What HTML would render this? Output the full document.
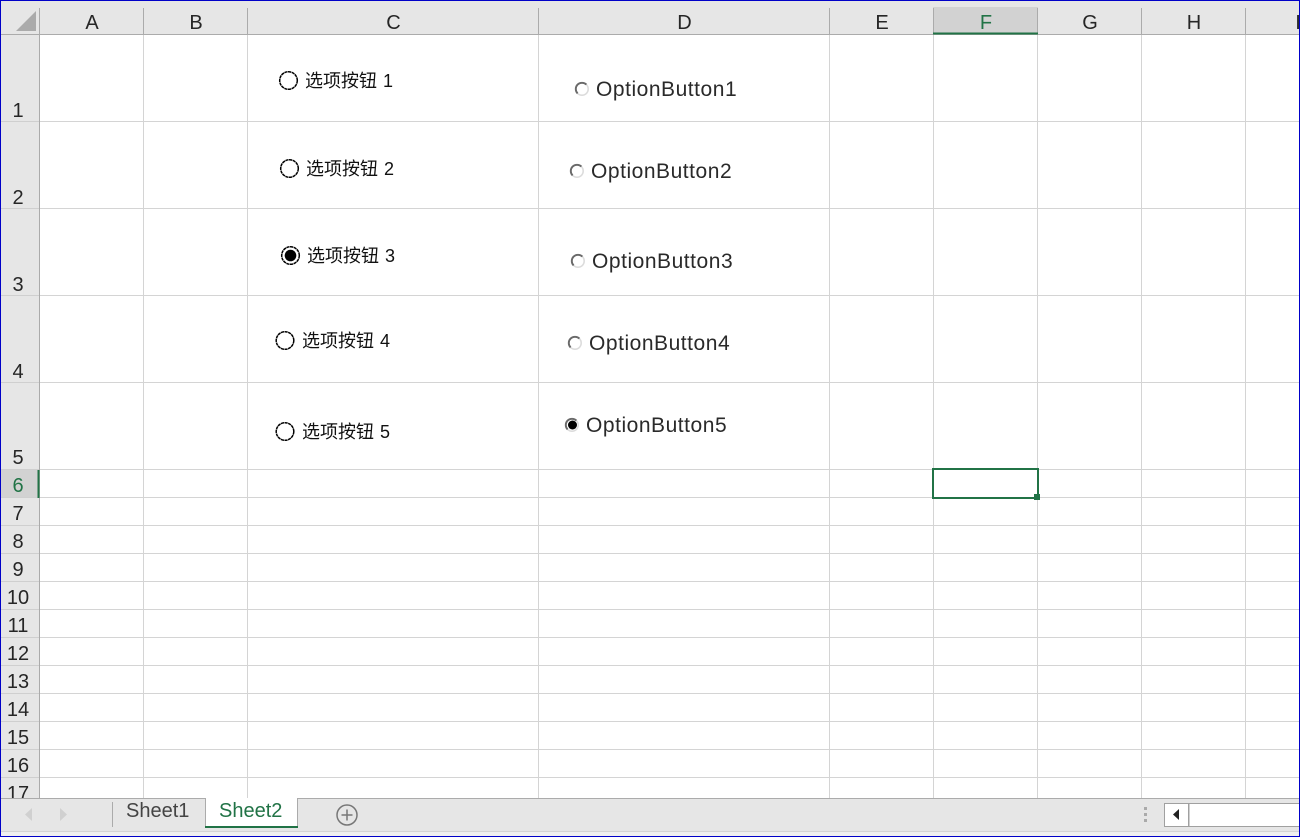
<!DOCTYPE html>
<html><head><meta charset="utf-8">
<style>
html,body{margin:0;padding:0;background:#fff}
#p{position:relative;width:1300px;height:837px;overflow:hidden;background:#fff;font-family:"Liberation Sans","Noto Sans CJK SC",sans-serif;color:#222}
#p div,#p span{position:absolute}
.t{white-space:nowrap;line-height:1}
.ch{font-size:20px;top:12px;text-align:center;line-height:22px;height:22px;color:#262626}
.rh{font-size:20px;left:2px;width:32px;text-align:center;line-height:22px;height:22px;color:#262626}
.cn{font-size:18px;color:#111;white-space:nowrap;line-height:22px;height:22px;word-spacing:1px}
.en{font-size:21px;letter-spacing:.53px;color:#2a2a2a;white-space:nowrap;line-height:24px;height:24px}
svg{position:absolute;overflow:visible}
</style></head><body>
<div id="p">
<!-- headers -->
<div style="left:0;top:0;width:1300px;height:34px;background:#e6e6e6"></div>
<div style="left:0;top:34px;width:39px;height:764px;background:#e6e6e6"></div>
<div style="left:933px;top:7px;width:105px;height:27px;background:#d2d2d2"></div>
<div style="left:0;top:470px;width:39px;height:28px;background:#d2d2d2"></div>

<!-- grid -->
<svg style="left:0;top:0" width="1300" height="837">
<g stroke="#d4d4d4" stroke-width="1" shape-rendering="crispEdges">
<path d="M143.5 35V798M247.5 35V798M538.5 35V798M829.5 35V798M933.5 35V798M1037.5 35V798M1141.5 35V798M1245.5 35V798"/>
<path d="M40 121.500H1300M40 208.500H1300M40 295.500H1300M40 382.500H1300M40 469.500H1300M40 497.500H1300M40 525.500H1300M40 553.500H1300M40 581.500H1300M40 609.500H1300M40 637.500H1300M40 665.500H1300M40 693.500H1300M40 721.500H1300M40 749.500H1300M40 777.500H1300"/>
</g>
<g stroke="#ababab" stroke-width="1" shape-rendering="crispEdges">
<path d="M0 34.500H1300M39.500 8V798"/>
<path d="M143.500 8V34M247.500 8V34M538.500 8V34M829.500 8V34M933.500 8V34M1037.500 8V34M1141.500 8V34M1245.500 8V34"/>
</g>
<path d="M1 121.500H39M1 208.500H39M1 295.500H39M1 382.500H39M1 469.500H39M1 497.500H39M1 525.500H39M1 553.500H39M1 581.500H39M1 609.500H39M1 637.500H39M1 665.500H39M1 693.500H39M1 721.500H39M1 749.500H39M1 777.500H39" stroke="#cfcfcf" stroke-width="1" shape-rendering="crispEdges"/>
<polygon points="36,11 36,31 16,31" fill="#ababab"/>
<path d="M933 33.500H1038" stroke="#217346" stroke-width="2" shape-rendering="crispEdges"/>
<path d="M38.500 470V498" stroke="#217346" stroke-width="2" shape-rendering="crispEdges"/>
<!-- selection -->
<rect x="933" y="469" width="105" height="29" fill="none" stroke="#217346" stroke-width="2" shape-rendering="crispEdges"/>
<rect x="1034" y="494" width="6" height="6" fill="#217346" stroke="#fff" stroke-width="0"/>
<!-- chinese radios -->
<g fill="#fff" stroke="#000" stroke-width="1.500" stroke-dasharray="3.200 .5">
<circle cx="288.500" cy="80.500" r="8.800"/>
<circle cx="289.500" cy="168.500" r="8.800"/>
<circle cx="290.500" cy="255.500" r="8.800"/>
<circle cx="285" cy="340.500" r="8.800"/>
<circle cx="285" cy="431.500" r="8.800"/>
</g>
<circle cx="290.500" cy="255.500" r="5.800" fill="#000"/>
<!-- english radios -->
<g fill="#fff">
<circle cx="582" cy="89" r="6.200" stroke="#dcdcdc" stroke-width="1.600"/><path d="M577.600 93.400A6.200 6.200 0 0 1 586.400 84.600" fill="none" stroke="#6a6a6a" stroke-width="1.900"/>
<circle cx="577" cy="171" r="6.200" stroke="#dcdcdc" stroke-width="1.600"/><path d="M572.600 175.400A6.200 6.200 0 0 1 581.400 166.600" fill="none" stroke="#6a6a6a" stroke-width="1.900"/>
<circle cx="578" cy="261" r="6.200" stroke="#dcdcdc" stroke-width="1.600"/><path d="M573.600 265.400A6.200 6.200 0 0 1 582.400 256.600" fill="none" stroke="#6a6a6a" stroke-width="1.900"/>
<circle cx="575" cy="343" r="6.200" stroke="#dcdcdc" stroke-width="1.600"/><path d="M570.600 347.400A6.200 6.200 0 0 1 579.400 338.600" fill="none" stroke="#6a6a6a" stroke-width="1.900"/>
<circle cx="572" cy="425" r="6.200" stroke="#dcdcdc" stroke-width="1.600"/><path d="M567.600 429.400A6.200 6.200 0 0 1 576.400 420.600" fill="none" stroke="#6a6a6a" stroke-width="1.900"/>
</g>
<circle cx="572.500" cy="425" r="4.500" fill="#000"/>
</svg>

<!-- column letters -->
<div class="ch" style="left:40px;width:104px">A</div>
<div class="ch" style="left:144px;width:104px">B</div>
<div class="ch" style="left:248px;width:291px">C</div>
<div class="ch" style="left:539px;width:291px">D</div>
<div class="ch" style="left:830px;width:104px">E</div>
<div class="ch" style="left:934px;width:104px;color:#217346">F</div>
<div class="ch" style="left:1038px;width:104px">G</div>
<div class="ch" style="left:1142px;width:104px">H</div>
<div class="ch" style="left:1246px;width:104px">I</div>

<!-- row numbers -->
<div class="rh" style="top:100px">1</div>
<div class="rh" style="top:187px">2</div>
<div class="rh" style="top:274px">3</div>
<div class="rh" style="top:361px">4</div>
<div class="rh" style="top:447px">5</div>
<div class="rh" style="top:475px;color:#217346">6</div>
<div class="rh" style="top:503px">7</div>
<div class="rh" style="top:531px">8</div>
<div class="rh" style="top:559px">9</div>
<div class="rh" style="top:587px">10</div>
<div class="rh" style="top:615px">11</div>
<div class="rh" style="top:643px">12</div>
<div class="rh" style="top:671px">13</div>
<div class="rh" style="top:699px">14</div>
<div class="rh" style="top:727px">15</div>
<div class="rh" style="top:755px">16</div>
<div class="rh" style="top:783px">17</div>

<!-- control labels -->
<div class="cn" style="left:305px;top:70px">选项按钮 1</div>
<div class="cn" style="left:306px;top:158px">选项按钮 2</div>
<div class="cn" style="left:307px;top:245px">选项按钮 3</div>
<div class="cn" style="left:302px;top:330px">选项按钮 4</div>
<div class="cn" style="left:302px;top:421px">选项按钮 5</div>
<div class="en" style="left:596px;top:78px">OptionButton1</div>
<div class="en" style="left:591px;top:160px">OptionButton2</div>
<div class="en" style="left:592px;top:250px">OptionButton3</div>
<div class="en" style="left:589px;top:332px">OptionButton4</div>
<div class="en" style="left:586px;top:414px">OptionButton5</div>

<!-- bottom bar -->
<div style="left:0;top:798px;width:1300px;height:39px;background:#e6e6e6;border-top:1px solid #ababab;box-sizing:border-box"></div>
<div style="left:0;top:831px;width:1300px;height:6px;background:#f0f0f0;border-top:1px solid #d4d4d4;box-sizing:border-box"></div>
<div style="left:205px;top:798px;width:93px;height:30px;background:#fff;border-left:1px solid #ababab;border-right:1px solid #ababab;box-sizing:border-box"></div>
<div style="left:205px;top:826px;width:93px;height:2px;background:#217346"></div>
<div style="left:112px;top:802px;width:1px;height:25px;background:#ababab"></div>
<div class="t" style="left:126px;top:800px;font-size:20px;line-height:22px;color:#444">Sheet1</div>
<div class="t" style="left:219px;top:800px;font-size:20px;line-height:22px;color:#217346">Sheet2</div>
<svg style="left:0;top:0" width="1300" height="837">
<polygon points="32,808 25,814.500 32,821" fill="#d0d0d0"/>
<polygon points="60,808 67,814.500 60,821" fill="#d0d0d0"/>
<circle cx="347" cy="815" r="10" fill="none" stroke="#777" stroke-width="1.500"/>
<path d="M347 809.500V820.500M341.500 815H352.500" stroke="#777" stroke-width="1.500"/>
<g fill="#aaa"><rect x="1144" y="807" width="3" height="3"/><rect x="1144" y="813" width="3" height="3"/><rect x="1144" y="819" width="3" height="3"/></g>
<rect x="1164.500" y="803.500" width="140" height="23" fill="#fff" stroke="#a0a0a0" shape-rendering="crispEdges"/>
<path d="M1188.500 803V827" stroke="#a0a0a0" stroke-width="1.500" shape-rendering="crispEdges"/>
<polygon points="1179,809 1173,814.500 1179,820" fill="#222"/>
</svg>

<!-- blue frame -->
<div style="left:0;top:0;width:1300px;height:837px;border:1px solid #0000c8;box-sizing:border-box"></div>
</div>
</body></html>
